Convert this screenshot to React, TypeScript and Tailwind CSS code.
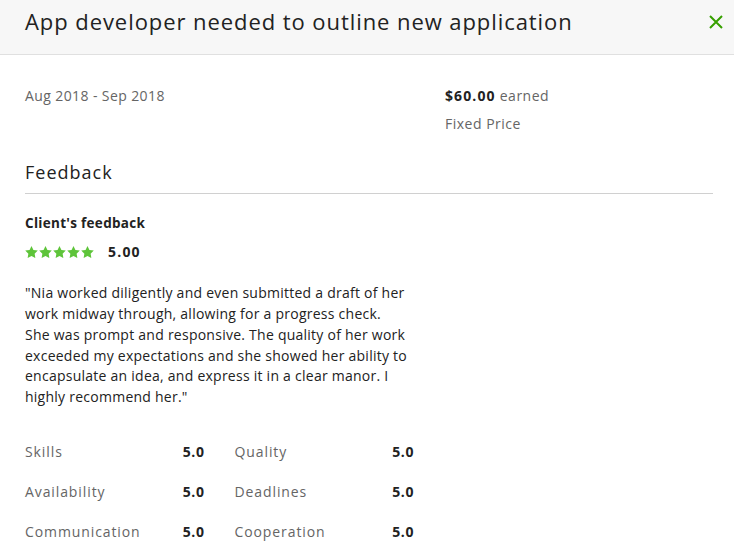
import React from "react";

const ratings = [
	["Skills", "5.0", "Quality", "5.0"],
	["Availability", "5.0", "Deadlines", "5.0"],
	["Communication", "5.0", "Cooperation", "5.0"],
];

function Star() {
	return (
		<svg width="13" height="12" viewBox="0 0 24 23" className="fill-[#5ec43a]">
			<path d="M12 0l3.7 7.6 8.3 1.2-6 5.9 1.4 8.3L12 19l-7.4 4 1.4-8.3-6-5.9 8.3-1.2z" />
		</svg>
	);
}

export default function App() {
	return (
		<div className="w-[734px] h-[556px] overflow-hidden bg-white text-[#222] font-['Open_Sans',sans-serif]">
			<div className="h-[55px] bg-[#f7f7f7] border-b border-[#e0e0e0] flex items-center justify-between pl-[25px] pr-[10px] pb-[11px]">
				<h1 className="text-[22px] text-[#222] tracking-[0.93px]">App developer needed to outline new application</h1>
				<svg width="16" height="16" viewBox="0 0 16 16" className="stroke-[#37a000]">
					<path d="M2 2l12 12M14 2L2 14" strokeWidth="2" />
				</svg>
			</div>

			<div className="pl-[25px] pr-[21px] pt-[30px]">
				<div className="flex text-[14px] text-[#656565]">
					<div className="w-[420px] tracking-[0.4px]">Aug 2018 - Sep 2018</div>
					<div className="flex flex-col gap-[7px] tracking-[0.5px]">
						<div>
							<span className="font-bold text-[#222] tracking-[1.1px]">$60.00</span> earned
						</div>
						<div>Fixed Price</div>
					</div>
				</div>

				<h2 className="mt-[25px] text-[18px] text-[#222] pb-[7px] border-b border-[#d0d0d0] tracking-[1px]">Feedback</h2>

				<div className="mt-[19px] text-[13.5px] font-bold tracking-[0.3px]">Client's feedback</div>
				<div className="mt-[8px] flex items-center">
					<div className="flex gap-[1px]">
						<Star />
						<Star />
						<Star />
						<Star />
						<Star />
					</div>
					<span className="ml-[14px] text-[14px] font-bold tracking-[1.2px]">5.00</span>
				</div>

				<p className="mt-[21px] w-[382px] text-[14px] leading-[20.8px] text-[#222] tracking-[0.25px]">
					"Nia worked diligently and even submitted a draft of her work midway through, allowing for a progress check. She
					was prompt and responsive. The quality of her work exceeded my expectations and she showed her ability to
					encapsulate an idea, and express it in a clear manor. I highly recommend her."
				</p>

				<div className="mt-[33px] w-[389px] grid grid-cols-2 gap-x-[30px] gap-y-[19px] text-[14px] tracking-[0.9px]">
					{ratings.map((r) => (
						<React.Fragment key={r[0]}>
							<div className="flex justify-between">
								<span className="text-[#656565]">{r[0]}</span>
								<span className="font-bold tracking-[0.6px]">{r[1]}</span>
							</div>
							<div className="flex justify-between">
								<span className="text-[#656565]">{r[2]}</span>
								<span className="font-bold tracking-[0.6px]">{r[3]}</span>
							</div>
						</React.Fragment>
					))}
				</div>
			</div>
		</div>
	);
}
